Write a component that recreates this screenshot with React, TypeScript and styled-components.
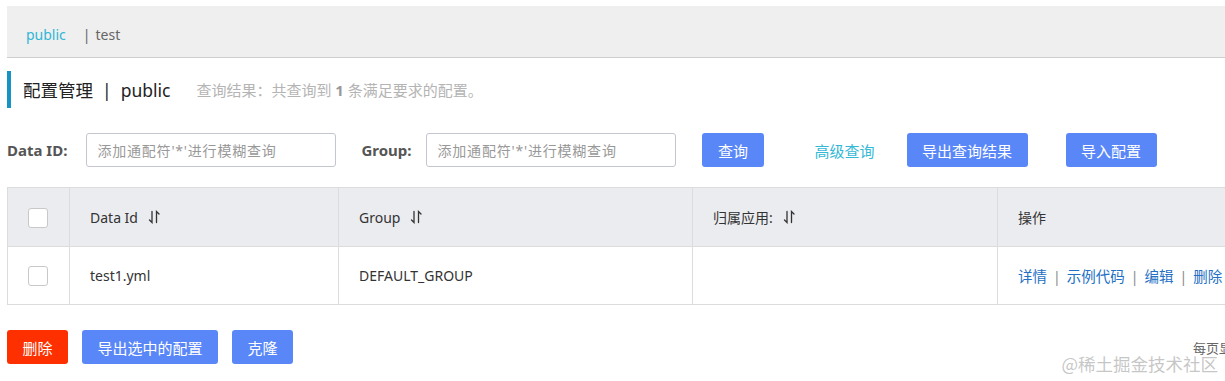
import styled, { createGlobalStyle } from 'styled-components';

const GlobalStyle = createGlobalStyle`
    html, body {
        margin: 0;
        padding: 0;
        background: #fff;
        overflow: hidden;
    }
    body {
        font-family: "Noto Sans", "Noto Sans CJK SC", sans-serif;
        font-size: 14px;
        color: #333;
    }
`

type Column = {
    title: string,
    width: number,
    sortable?: boolean
}

const columns: Column[] = [
    { title: 'Data Id', width: 269, sortable: true },
    { title: 'Group', width: 354, sortable: true },
    { title: '归属应用:', width: 305, sortable: true },
    { title: '操作', width: 316 }
]

const actions = ['详情', '示例代码', '编辑', '删除']

const SortIcon = () => (
    <svg width="12" height="14" viewBox="0 0 12 14" fill="none" stroke="#333" strokeWidth="1.3" strokeLinecap="round">
        <path d="M4 1.5 V12.5 L1.5 10" />
        <path d="M8.5 12.5 V1.5 L11 4" />
    </svg>
)

const App = () => {
    return (
        <Page>
            <GlobalStyle />
            <Content>
                <NamespaceBar>
                    <NsItem $active>public</NsItem>
                    <NsSep>|</NsSep>
                    <NsItem>test</NsItem>
                </NamespaceBar>

                <TitleRow>
                    <Title>配置管理<TitleSep>|</TitleSep>public</Title>
                    <Hint>查询结果：共查询到 <b>1</b> 条满足要求的配置。</Hint>
                </TitleRow>

                <SearchRow>
                    <Label>Data ID:</Label>
                    <Input placeholder="添加通配符'*'进行模糊查询" />
                    <Label>Group:</Label>
                    <Input placeholder="添加通配符'*'进行模糊查询" />
                    <Button>查询</Button>
                    <LinkButton>高级查询</LinkButton>
                    <Button>导出查询结果</Button>
                    <Button>导入配置</Button>
                </SearchRow>

                <Table>
                    <colgroup>
                        <col style={{ width: 62 }} />
                        {columns.map(c => <col key={c.title} style={{ width: c.width }} />)}
                    </colgroup>
                    <thead>
                        <tr>
                            <HeadCell $center><Checkbox /></HeadCell>
                            {columns.map(c => (
                                <HeadCell key={c.title}>
                                    <HeadInner>
                                        {c.title}
                                        {c.sortable && <SortIcon />}
                                    </HeadInner>
                                </HeadCell>
                            ))}
                        </tr>
                    </thead>
                    <tbody>
                        <tr>
                            <Cell $center><Checkbox /></Cell>
                            <Cell>test1.yml</Cell>
                            <Cell>DEFAULT_GROUP</Cell>
                            <Cell></Cell>
                            <Cell>
                                <Actions>
                                    {actions.map((a, i) => (
                                        <span key={a}>
                                            {i > 0 && <ActionSep>|</ActionSep>}
                                            <ActionLink>{a}</ActionLink>
                                        </span>
                                    ))}
                                </Actions>
                            </Cell>
                        </tr>
                    </tbody>
                </Table>

                <BottomBar>
                    <Button $danger>删除</Button>
                    <Button>导出选中的配置</Button>
                    <Button>克隆</Button>
                    <Pager>每页显示:</Pager>
                </BottomBar>
            </Content>
            <Watermark>@稀土掘金技术社区</Watermark>
        </Page>
    );
}

export default App;

const Page = styled.div`
    position: relative;
    width: 1225px;
    height: 381px;
    overflow: hidden;
`

const Content = styled.div`
    width: 1306px;
    padding: 6px 0 0 7px;
`

const NamespaceBar = styled.div`
    display: flex;
    align-items: center;
    box-sizing: border-box;
    height: 52px;
    padding: 6px 0 0 19px;
    background: #efefef;
    border-bottom: 1px solid #cfcfcf;
`

const NsItem = styled.span<{ $active?: boolean }>`
    font-size: 14px;
    color: ${p => p.$active ? '#2fb6d6' : '#666'};
`

const NsSep = styled.span`
    margin: 0 5px 0 17px;
    color: #666;
    font-size: 14px;
`

const TitleRow = styled.div`
    display: flex;
    align-items: center;
    height: 37px;
    margin-top: 13px;
    padding-left: 12px;
    border-left: 4px solid #1593c3;
`

const Title = styled.span`
    font-size: 17.5px;
    color: #222;
`

const TitleSep = styled.span`
    margin: 0 9px;
`

const Hint = styled.span`
    margin-left: 26px;
    font-size: 15px;
    color: #b4b4b4;
    b {
        color: #999;
    }
`

const SearchRow = styled.div`
    display: flex;
    align-items: center;
    height: 34px;
    margin-top: 25px;
`

const Label = styled.label`
    font-size: 15px;
    font-weight: bold;
    color: #555;
    margin-right: 19px;
    & ~ & {
        margin-left: 25px;
        margin-right: 15px;
    }
`

const Input = styled.input`
    box-sizing: border-box;
    width: 250px;
    height: 34px;
    padding: 0 10px;
    border: 1px solid #c4c6cf;
    border-radius: 3px;
    font-family: inherit;
    font-size: 14px;
    color: #333;
    outline: none;
    &::placeholder {
        color: #999;
        letter-spacing: 0.8px;
    }
    & + label + & {
        margin-right: 26px;
    }
`

const Button = styled.button<{ $danger?: boolean }>`
    box-sizing: border-box;
    height: 34px;
    padding: 0 15.5px;
    border: none;
    border-radius: 3px;
    background: ${p => p.$danger ? '#ff3000' : '#5a87f8'};
    color: #fff;
    font-family: inherit;
    font-size: 15px;
    white-space: nowrap;
    & + & {
        margin-left: 14px;
    }
`

const LinkButton = styled.span`
    margin: 0 32px 0 51px;
    font-size: 15px;
    color: #33b8d6;
    & + ${Button} + ${Button} {
        margin-left: 38px;
    }
`

const Table = styled.table`
    width: 100%;
    margin-top: 20px;
    border-collapse: collapse;
    table-layout: fixed;
`

const HeadCell = styled.th<{ $center?: boolean }>`
    height: 58px;
    padding: 0 ${p => p.$center ? 0 : 20}px;
    background: #ebecef;
    border: 1px solid #dcdcdc;
    text-align: ${p => p.$center ? 'center' : 'left'};
    font-weight: normal;
    font-size: 14px;
    color: #333;
`

const HeadInner = styled.div`
    display: flex;
    align-items: center;
    gap: 10px;
`

const Cell = styled.td<{ $center?: boolean }>`
    height: 57px;
    padding: 0 ${p => p.$center ? 0 : 20}px;
    border: 1px solid #dcdcdc;
    text-align: ${p => p.$center ? 'center' : 'left'};
    font-size: 14px;
    color: #333;
    white-space: nowrap;
`

const Checkbox = styled.span`
    display: inline-block;
    box-sizing: border-box;
    width: 20px;
    height: 20px;
    margin-left: -2px;
    border: 1px solid #c8c8c8;
    border-radius: 3px;
    background: #fff;
    vertical-align: middle;
`

const Actions = styled.div`
    display: flex;
    align-items: center;
`

const ActionLink = styled.a`
    color: #2470c4;
    font-size: 14.5px;
    cursor: pointer;
`

const ActionSep = styled.span`
    margin: 0 6px;
    color: #888;
`

const BottomBar = styled.div`
    display: flex;
    align-items: center;
    margin-top: 25px;
`

const Pager = styled.div`
    width: 120px;
    margin-left: auto;
    font-size: 13px;
    color: #666;
`

const Watermark = styled.div`
    position: absolute;
    right: 7px;
    bottom: 5px;
    font-size: 17.5px;
    color: rgba(180, 180, 180, 0.75);
    font-family: "Noto Sans CJK SC", sans-serif;
`
